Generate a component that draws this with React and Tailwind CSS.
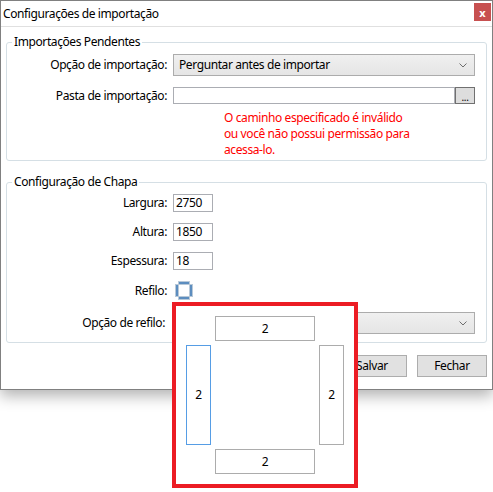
import React from 'react';

const Chevron = () => (
  <svg width="8" height="5" viewBox="0 0 8 5" className="shrink-0">
    <path d="M0.5 0.5 L4 4 L7.5 0.5" fill="none" stroke="#6d6d6d" strokeWidth="1" />
  </svg>
);

const Combo = ({ value }) => (
  <div className="flex h-[22px] w-[302px] items-center justify-between border border-[#acacac] bg-gradient-to-b from-[#f0f0f0] to-[#e5e5e5] pl-[5px] pr-[7px]">
    <span>{value}</span>
    <Chevron />
  </div>
);

const NumBox = ({ value }) => (
  <div className="flex h-[18px] w-[40px] items-center border border-[#abadb3] bg-white pl-[2px] leading-[16px]">
    {value}
  </div>
);

// icon of the "Refilo" toggle: four separate edges of a square
const RefiloIcon = () => (
  <svg width="18" height="19" viewBox="0 0 18 19" className="ml-[2px]">
    <rect x="3.5" y="0.5" width="11" height="3" fill="#5c8dbf" stroke="#b9c9d8" />
    <rect x="3.5" y="15.5" width="11" height="3" fill="#5c8dbf" stroke="#b9c9d8" />
    <rect x="0.5" y="3.5" width="3" height="12" fill="#5c8dbf" stroke="#b9c9d8" />
    <rect x="14.5" y="3.5" width="3" height="12" fill="#5c8dbf" stroke="#b9c9d8" />
  </svg>
);

const EdgeBox = ({ focused }) => (
  <div
    className={
      'flex items-center justify-center bg-white border ' +
      (focused ? 'border-[#569de5]' : 'border-[#acacac]')
    }
  >
    2
  </div>
);

export default function App() {
  return (
    <div className="relative h-[492px] w-[493px] overflow-hidden bg-white font-['Noto_Sans',sans-serif] text-[12px] leading-[16px] tracking-[-0.4px] text-black">
      {/* dialog window */}
      <div className="flex w-[493px] flex-col border border-[#808080] bg-white shadow-[0_6px_14px_rgba(0,0,0,0.3)]">
        {/* title bar */}
        <div className="flex h-[26px] items-start justify-between border-b border-[#e0e0e0]">
          <span className="pl-[2px] pt-[5px]">Configurações de importação</span>
          <button className="mr-[1px] mt-[2px] flex h-[18px] w-[17px] items-center justify-center bg-[#c75050] text-[11px] font-bold leading-none tracking-normal text-white">
            x
          </button>
        </div>

        <div className="flex flex-col px-[5px] pb-[12px] pt-[7px]">
          {/* Importações Pendentes */}
          <fieldset className="rounded-[3px] border border-[#d5dfe5] pb-[2px] pr-[9px]">
            <legend className="ml-[5px] px-[2px]">Importações Pendentes</legend>
            <div className="mt-[4px] grid grid-cols-[160px_302px] items-center gap-x-[6px]">
              <span className="text-right">Opção de importação:</span>
              <Combo value="Perguntar antes de importar" />

              <span className="mt-[11px] text-right">Pasta de importação:</span>
              <div className="mt-[11px] flex h-[17px] w-[302px]">
                <div className="flex-1 border border-[#abadb3] bg-white" />
                <div className="flex w-[20px] items-end justify-center border border-[#707070] bg-[#dddddd] text-[10px] leading-[12px]">
                  ...
                </div>
              </div>

              <span />
              <p className="mt-[6px] pl-[51px] text-[#ff0000]">
                O caminho especificado é inválido
                <br />
                ou você não possui permissão para
                <br />
                acessa-lo.
              </p>
            </div>
          </fieldset>

          {/* Configuração de Chapa */}
          <fieldset className="mt-[13px] rounded-[3px] border border-[#d5dfe5] pb-[8px] pr-[9px]">
            <legend className="ml-[5px] px-[2px]">Configuração de Chapa</legend>
            <div className="mt-[4px] grid grid-cols-[160px_302px] items-center gap-x-[6px] gap-y-[11px]">
              <span className="text-right">Largura:</span>
              <NumBox value="2750" />
              <span className="text-right">Altura:</span>
              <NumBox value="1850" />
              <span className="text-right">Espessura:</span>
              <NumBox value="18" />
              <span className="text-right">Refilo:</span>
              <RefiloIcon />
              <span className="mt-[1px] pr-[2px] text-right">Opção de refilo:</span>
              <div className="mt-[1px]">
                <Combo value="" />
              </div>
            </div>
          </fieldset>

          {/* buttons */}
          <div className="mt-[12px] flex justify-end gap-[10px]">
            <button className="h-[22px] w-[70px] border border-[#adadad] bg-[#e1e1e1]">Salvar</button>
            <button className="h-[22px] w-[70px] border border-[#adadad] bg-[#e1e1e1]">Fechar</button>
          </div>
        </div>
      </div>

      {/* refilo popup */}
      <div className="absolute left-[172px] top-[302px] grid h-[186px] w-[186px] grid-cols-[25px_100px_25px] grid-rows-[25px_100px_25px] gap-[4px] border-4 border-[#ec1c24] bg-white p-[10px]">
        <span />
        <EdgeBox />
        <span />
        <EdgeBox focused />
        <span />
        <EdgeBox />
        <span />
        <EdgeBox />
        <span />
      </div>
    </div>
  );
}
